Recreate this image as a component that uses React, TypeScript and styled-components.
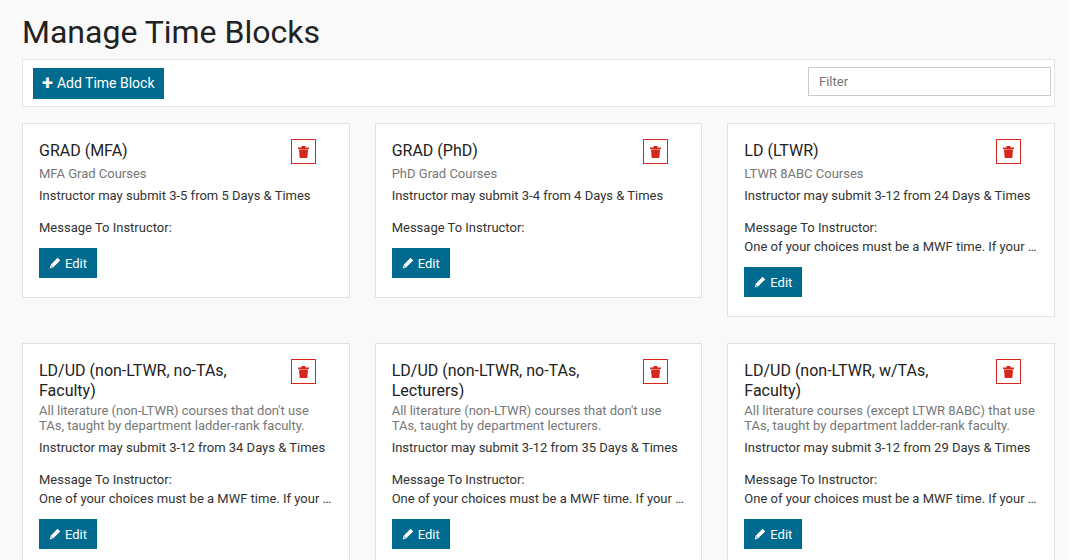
import React from "react";
import styled, { createGlobalStyle } from "styled-components";

const G = createGlobalStyle`
  body { margin: 0; background: #f9f9f9; font-family: Roboto, "Liberation Sans", sans-serif; color: #333; }
`;
const Page = styled.div`padding: 12px 14px 0 22px;`;
const Title = styled.h1`margin: 0 0 7px; font-size: 32px; font-weight: 400; color: #222; line-height: 40px;`;
const Toolbar = styled.div`
  background: #fff; border: 1px solid #e6e6e6; height: 46px; display: flex; align-items: center;
  justify-content: space-between; padding: 0 3px 0 10px;
`;
const Btn = styled.button<{ $big?: boolean }>`
  background: #006b8f; color: #fff; border: none; font: 400 ${(p) => (p.$big ? "14px" : "13px")} Roboto, sans-serif;
  height: ${(p) => (p.$big ? "31px" : "30px")}; padding: 0 ${(p) => (p.$big ? "9px" : "10px")};
  display: inline-flex; align-items: center; gap: 4px; cursor: pointer;
`;
const Filter = styled.input`
  width: 243px; height: 29px; box-sizing: border-box; border: 1px solid #ccc; padding: 0 10px;
  font: 13px Roboto, sans-serif; margin-top: -3px;
`;
const Grid = styled.div`
  display: grid; grid-template-columns: repeat(3, minmax(0, 1fr)); column-gap: 25px; row-gap: 26px; margin-top: 16px; align-items: start;
`;
const Card = styled.div`background: #fff; border: 1px solid #e3e3e3; padding: 15px 16px 19px; min-width: 0;`;
const Head = styled.div`display: flex; justify-content: space-between; align-items: flex-start;`;
const CTitle = styled.div`font-size: 16px; line-height: 20px; color: #222; max-width: 230px; margin-top: 2px;`;
const Del = styled.button`
  width: 25px; height: 25px; border: 1px solid #d9261c; background: #fff; display: flex; align-items: center;
  justify-content: center; margin-right: 17px; padding: 0; flex: none;
`;
const Sub = styled.div`font-size: 13px; color: #777; line-height: 15px; margin-top: 2px;`;
const Line = styled.div`font-size: 13px; line-height: 16px; margin-top: 7px;`;
const Msg = styled.div`font-size: 13px; line-height: 16px; margin-top: 16px;`;
const MsgText = styled.div`font-size: 13px; line-height: 16px; margin-top: 3px; white-space: nowrap; overflow: hidden; text-overflow: ellipsis;`;
const EditRow = styled.div`margin-top: 12px;`;

const Trash = () => (
  <svg width="11" height="12" viewBox="0 0 11 12"><rect x="0" y="1.5" width="11" height="1.6" fill="#d9261c"/><rect x="3.5" y="0" width="4" height="2" fill="#d9261c"/><path d="M1 3.6h9l-0.7 8.4h-7.6z" fill="#d9261c"/></svg>
);
const Pencil = () => (
  <svg width="12" height="12" viewBox="0 0 12 12"><path d="M8.6 0.8l2.6 2.6-7.2 7.2-3.3 0.8 0.8-3.3z" fill="#fff"/><path d="M1.6 8.4l2 2" stroke="#006b8f" strokeWidth="0.8"/></svg>
);

const msg = "One of your choices must be a MWF time. If your course meets twice weekly";
const cards = [
  { t: "GRAD (MFA)", s: "MFA Grad Courses", i: "Instructor may submit 3-5 from 5 Days & Times" },
  { t: "GRAD (PhD)", s: "PhD Grad Courses", i: "Instructor may submit 3-4 from 4 Days & Times" },
  { t: "LD (LTWR)", s: "LTWR 8ABC Courses", i: "Instructor may submit 3-12 from 24 Days & Times", m: msg },
  { t: "LD/UD (non-LTWR, no-TAs, Faculty)", s: "All literature (non-LTWR) courses that don't use TAs, taught by department ladder-rank faculty.", i: "Instructor may submit 3-12 from 34 Days & Times", m: msg },
  { t: "LD/UD (non-LTWR, no-TAs, Lecturers)", s: "All literature (non-LTWR) courses that don't use TAs, taught by department lecturers.", i: "Instructor may submit 3-12 from 35 Days & Times", m: msg },
  { t: "LD/UD (non-LTWR, w/TAs, Faculty)", s: "All literature courses (except LTWR 8ABC) that use TAs, taught by department ladder-rank faculty.", i: "Instructor may submit 3-12 from 29 Days & Times", m: msg },
];

export default function App() {
  return (
    <Page>
      <G />
      <Title>Manage Time Blocks</Title>
      <Toolbar>
        <Btn $big><span style={{ fontSize: 20, fontWeight: 700, lineHeight: "14px" }}>+</span>Add Time Block</Btn>
        <Filter placeholder="Filter" />
      </Toolbar>
      <Grid>
        {cards.map((c) => (
          <Card key={c.t}>
            <Head><CTitle>{c.t}</CTitle><Del><Trash /></Del></Head>
            <Sub>{c.s}</Sub>
            <Line>{c.i}</Line>
            <Msg>Message To Instructor:</Msg>
            {c.m && <MsgText>{c.m}</MsgText>}
            <EditRow><Btn><Pencil />Edit</Btn></EditRow>
          </Card>
        ))}
      </Grid>
    </Page>
  );
}
